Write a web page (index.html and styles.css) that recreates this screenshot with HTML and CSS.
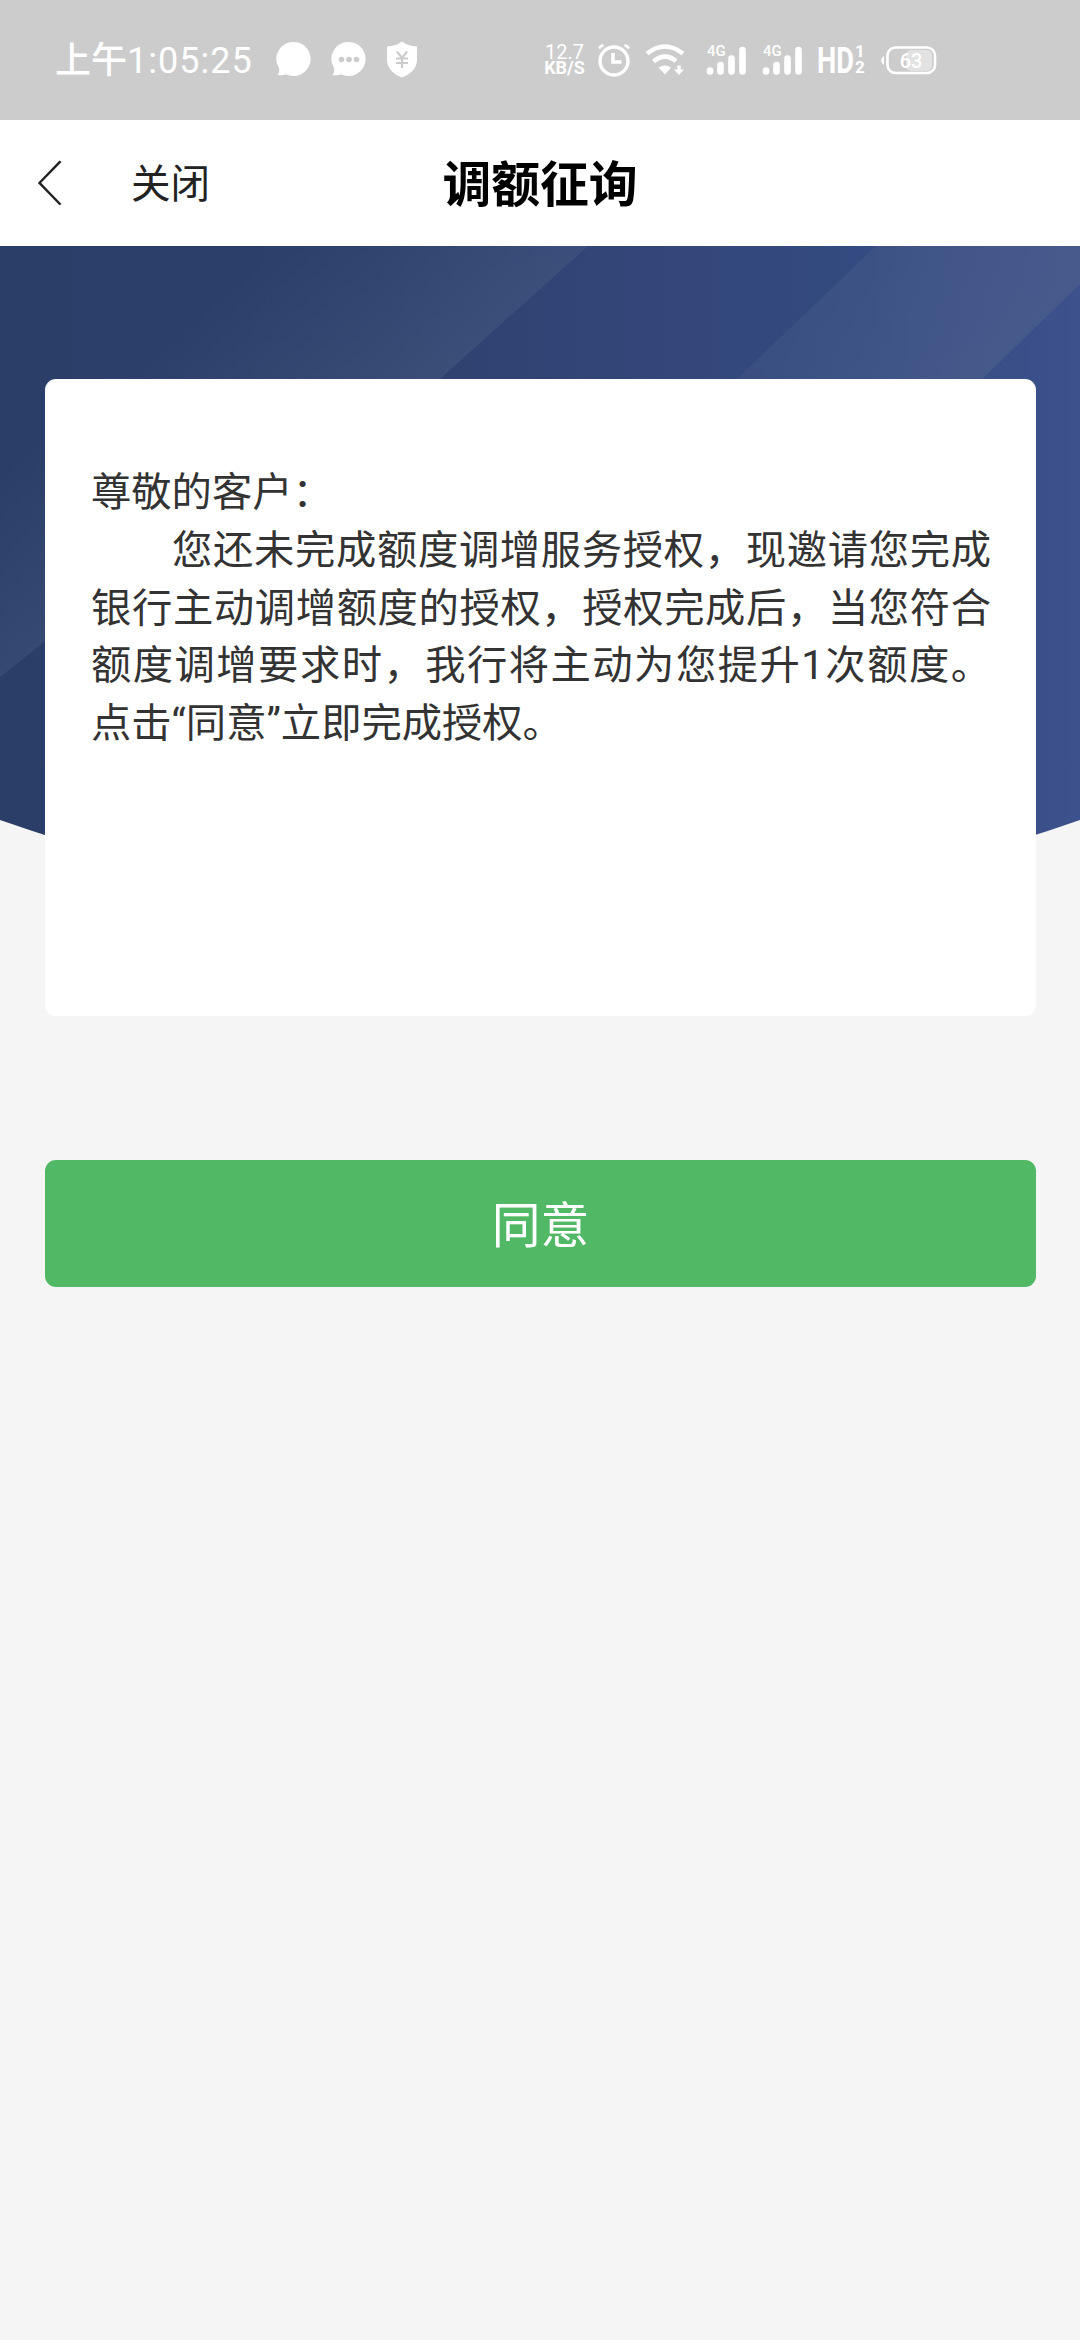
FILE: index.html
```
<!DOCTYPE html>
<html lang="zh-CN">
<head>
    <meta charset="UTF-8">
    <meta name="viewport" content="width=device-width, initial-scale=1.0">
    <title>调额征询</title>
    <link rel="stylesheet" href="styles.css">
</head>
<body>
    <div class="status-bar">
        <span class="time">上午<span class="digits">1:05:25</span></span>
        <div class="notices">
            <svg width="36" height="38" viewBox="0 0 36 38">
                <path d="M18 1a17 17 0 1 1-8 32.200Q6 35 1.500 34Q4 30.500 3 27A17 17 0 0 1 18 1z" fill="#fff"/>
            </svg>
            <svg width="36" height="38" viewBox="0 0 36 38">
                <path d="M18 1a17 17 0 1 1-8 32.200Q6 35 1.500 34Q4 30.500 3 27A17 17 0 0 1 18 1z" fill="#fff"/>
                <g fill="#ccc"><circle cx="10.500" cy="18.500" r="2.800"/><circle cx="18" cy="18.500" r="2.800"/><circle cx="25.500" cy="18.500" r="2.800"/></g>
            </svg>
            <svg width="32" height="38" viewBox="0 0 32 38">
                <path d="M16 .500Q22 5 31 5.500V19Q30.500 31 16 36.500Q1.500 31 1 19V5.500Q10 5 16 .500z" fill="#fff"/>
                <path d="M11 10.500l5 6.500 5-6.500M10 17.500h12M10 22h12M16 17v10" fill="none" stroke="#ccc" stroke-width="2.200"/>
            </svg>
        </div>
        <div class="system">
            <div class="speed"><span>12.7</span><b>KB/S</b></div>
            <svg class="alarm" width="34" height="34" viewBox="0 0 34 34">
                <g fill="none" stroke="#fff">
                    <circle cx="17" cy="18" r="14" stroke-width="3.400"/>
                    <path d="M16 10v9h8.500" stroke-width="3.600"/>
                    <path d="M2 5.500Q3.500 3 6.500 2M27.500 2Q30.500 3 32 5.500" stroke-width="2.600"/>
                </g>
            </svg>
            <svg class="wifi" width="40" height="34" viewBox="0 0 40 34">
                <path d="M2 10.500Q20-3.500 38 10.500" fill="none" stroke="#fff" stroke-width="4.600"/>
                <path d="M8.500 18.500Q20 9 31 18" fill="none" stroke="#fff" stroke-width="4.600"/>
                <path d="M13.500 24.500Q20 20.500 26 24.500L20 31.500z" fill="#fff"/>
                <path d="M32.300 22.500h3.400v4h3.300l-5 5.500-5-5.500h3.300z" fill="#fff"/>
            </svg>
            <svg class="signal" width="42" height="34" viewBox="0 0 42 34">
                <text x="1" y="13" class="net">4G</text>
                <path d="M4 27.500v1M14.500 22v6.500M25.500 15.500v13M36.500 7v21.500" stroke="#fff" stroke-width="6.600" stroke-linecap="round"/>
            </svg>
            <svg class="signal second" width="42" height="34" viewBox="0 0 42 34">
                <text x="1" y="13" class="net">4G</text>
                <path d="M4 27.500v1M14.500 22v6.500M25.500 15.500v13M36.500 7v21.500" stroke="#fff" stroke-width="6.600" stroke-linecap="round"/>
            </svg>
            <svg class="hd" width="48" height="34" viewBox="0 0 48 34">
                <text x="-1" y="29.500" class="hd-text" textLength="37" lengthAdjust="spacingAndGlyphs">HD</text>
                <text x="37" y="14" class="sim">1</text>
                <text x="37" y="29.500" class="sim">2</text>
            </svg>
            <svg class="battery" width="56" height="34" viewBox="0 0 56 34">
                <rect x="25" y="7" width="26" height="21" rx="5" fill="#e2e2e2"/>
                <rect x="6.500" y="4.500" width="47.500" height="25.500" rx="8" fill="none" stroke="#fff" stroke-width="2.600"/>
                <path d="M3 13v9Q0 20 0 17.500T3 13z" fill="#fff"/>
                <text x="30" y="24.500" text-anchor="middle" class="level">63</text>
            </svg>
        </div>
    </div>

    <div class="nav-bar">
        <div class="nav-left">
            <svg class="back" width="26" height="56" viewBox="0 0 26 56">
                <path d="M23.500 1.500L2.500 28L23.500 54.500" fill="none" stroke="#222" stroke-width="2.600" transform="translate(0 5) scale(1 .82)"/>
            </svg>
            <span class="close">关闭</span>
        </div>
        <h1>调额征询</h1>
    </div>

    <div class="main">
        <svg class="hero" width="1080" height="680" viewBox="0 0 1080 680">
            <defs>
                <linearGradient id="base" x1="0" y1="0" x2="1" y2="0">
                    <stop offset="0" stop-color="#2a3e68"/>
                    <stop offset="0.350" stop-color="#2d406c"/>
                    <stop offset="0.600" stop-color="#334679"/>
                    <stop offset="0.800" stop-color="#334b80"/>
                    <stop offset="1" stop-color="#3d518c"/>
                </linearGradient>
                <linearGradient id="glow1" gradientUnits="userSpaceOnUse" x1="170" y1="90" x2="320" y2="278">
                    <stop offset="0" stop-color="#4a5f84" stop-opacity="0"/>
                    <stop offset="1" stop-color="#4a5f84" stop-opacity="0.500"/>
                </linearGradient>
                <linearGradient id="glow2" gradientUnits="userSpaceOnUse" x1="780" y1="90" x2="980" y2="200">
                    <stop offset="0" stop-color="#4a5d8c" stop-opacity="0.300"/>
                    <stop offset="1" stop-color="#4a5d8c" stop-opacity="0.750"/>
                </linearGradient>
                <clipPath id="curve"><path d="M0 0H1080V574Q540 763 0 574z"/></clipPath>
            </defs>
            <g clip-path="url(#curve)">
                <rect width="1080" height="680" fill="url(#base)"/>
                <path d="M0 0H588L440 133L43 397L0 431z" fill="url(#glow1)"/>
                <path d="M876 0H1080V38L975 140L690 400H480L740 130z" fill="url(#glow2)"/>
            </g>
        </svg>
        <div class="card">
            <p>尊敬的客户：</p>
            <p class="content">您还未完成额度调增服务授权，现邀请您完成银行主动调增额度的授权，授权完成后，当您符合额度调增要求时，我行将主动为您提升1次额度。点击“同意”立即完成授权。</p>
        </div>
    </div>

    <button class="agree">同意</button>
</body>
</html>
```

FILE: styles.css
```
* {
    box-sizing: border-box;
}

body {
    margin: 0;
    min-height: 2340px;
    background-color: #f5f5f5;
    color: #333;
    font-family: Roboto, "Noto Sans CJK SC", sans-serif;
}

svg {
    display: block;
    flex: none;
}

.status-bar {
    display: flex;
    align-items: center;
    height: 120px;
    padding: 0 143px 0 55px;
    background-color: #ccc;
    color: #fff;
}

.time {
    width: 221px;
    padding-top: 2px;
    font-size: 36px;
    font-weight: 500;
    line-height: 54px;
    white-space: nowrap;
}

.digits {
    font-weight: 400;
    letter-spacing: 1px;
}

.notices {
    display: flex;
    gap: 19px;
}

.system {
    display: flex;
    align-items: center;
    margin-left: auto;
}

.speed {
    display: flex;
    flex-direction: column;
    align-items: center;
    width: 43px;
    margin-right: 11px;
    font-size: 20px;
    font-weight: 400;
    line-height: 16px;
}

.speed b {
    font-size: 18px;
}

.wifi {
    margin-left: 14px;
}

.signal {
    margin-left: 21px;
}

.signal.second {
    margin-left: 14px;
}

.hd {
    margin-left: 14px;
}

.battery {
    margin-left: 15px;
}

.net,
.hd-text,
.sim,
.level {
    fill: #fff;
    font-weight: 500;
}

.net {
    font-size: 15px;
}

.hd-text {
    font-size: 36px;
    font-weight: bold;
}

.sim {
    font-size: 17px;
    font-weight: bold;
}

.level {
    font-size: 20px;
}

.nav-bar {
    display: grid;
    grid-template-columns: 1fr auto 1fr;
    align-items: center;
    height: 126px;
    background-color: #fff;
}

.nav-left {
    display: flex;
    align-items: center;
    padding-left: 37px;
}

.close {
    margin-left: 68px;
    padding-top: 3px;
    font-size: 39.500px;
    line-height: 60px;
    color: #222;
}

.nav-bar h1 {
    margin: 0;
    padding-top: 5px;
    font-size: 48.800px;
    font-weight: bold;
    line-height: 72px;
    color: #000;
}

/* hero e card ficam na mesma célula */
.main {
    display: grid;
    height: 770px;
}

.hero,
.card {
    grid-area: 1 / 1;
}

.card {
    width: 991px;
    height: 637px;
    margin: 133px 44px 0 45px;
    padding: 85px 45px 0 46px;
    background-color: #fff;
    border-radius: 11px;
    font-size: 40.300px;
    line-height: 57.800px;
}

.card p {
    margin: 0;
}

.card .content {
    text-align: justify;
    text-indent: 81px;
}

.agree {
    display: block;
    width: 991px;
    height: 127px;
    margin: 144px 44px 0 45px;
    padding: 0 0 5px;
    border: none;
    border-radius: 11px;
    background-color: #51b965;
    color: #fff;
    font-family: inherit;
    font-size: 48.800px;
    cursor: pointer;
}
```
